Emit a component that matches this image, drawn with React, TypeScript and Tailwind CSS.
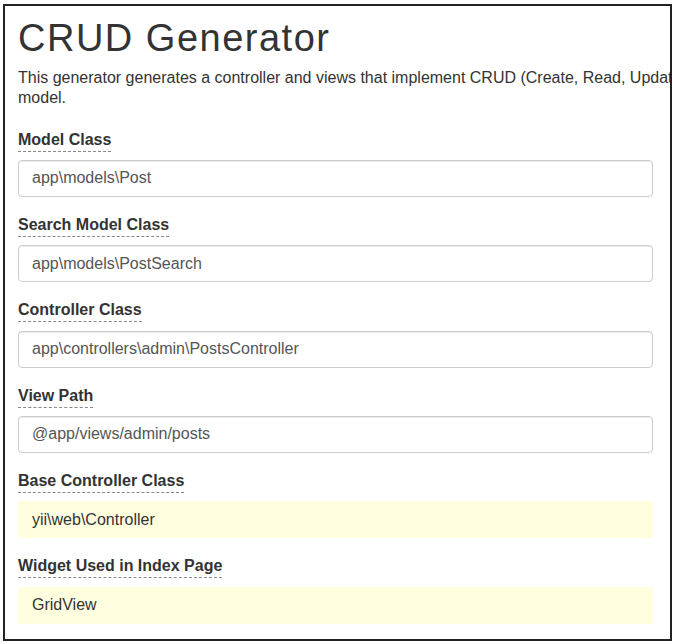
const fields = [
  { label: "Model Class", value: "app\\models\\Post", sticky: false },
  { label: "Search Model Class", value: "app\\models\\PostSearch", sticky: false },
  { label: "Controller Class", value: "app\\controllers\\admin\\PostsController", sticky: false },
  { label: "View Path", value: "@app/views/admin/posts", sticky: false },
  { label: "Base Controller Class", value: "yii\\web\\Controller", sticky: true },
  { label: "Widget Used in Index Page", value: "GridView", sticky: true },
];

export default function App() {
  return (
    <div className="w-[675px] h-[644px] bg-white pt-[4px] pl-[3px]">
      <div className="w-[669px] h-[637px] border-2 border-[#222] overflow-hidden pl-[13px] font-['Liberation_Sans',Arial,sans-serif] text-[#333]">
        <h1 className="mt-[10px] mb-[7.5px] text-[38px] leading-[44px] tracking-[1.5px] font-normal">CRUD Generator</h1>
        <p className="w-[1005px] text-[16px] leading-[20px]">
          This generator generates a controller and views that implement CRUD (Create, Read, Update, Delete)
          operations for the specified data model.
        </p>

        <form className="mt-[21px] w-[635px]">
          {fields.map((f) => (
            <div key={f.label} className="mb-[17.1px]">
              <label className="block w-fit text-[16px] leading-[22px] font-bold border-b border-dashed border-[#888] cursor-help">
                {f.label}
              </label>
              <input
                readOnly
                defaultValue={f.value}
                className={
                  f.sticky
                    ? "mt-[8.3px] block w-full h-[37px] px-[13px] text-[16px] text-[#333] bg-[#ffffe0] border border-[#ffffe0] outline-none"
                    : "mt-[8.3px] block w-full h-[37px] px-[13px] text-[16px] text-[#555] bg-white border border-[#ccc] rounded-[4px] shadow-[inset_0_1px_1px_rgba(0,0,0,0.075)] outline-none"
                }
              />
            </div>
          ))}
        </form>
      </div>
    </div>
  );
}
